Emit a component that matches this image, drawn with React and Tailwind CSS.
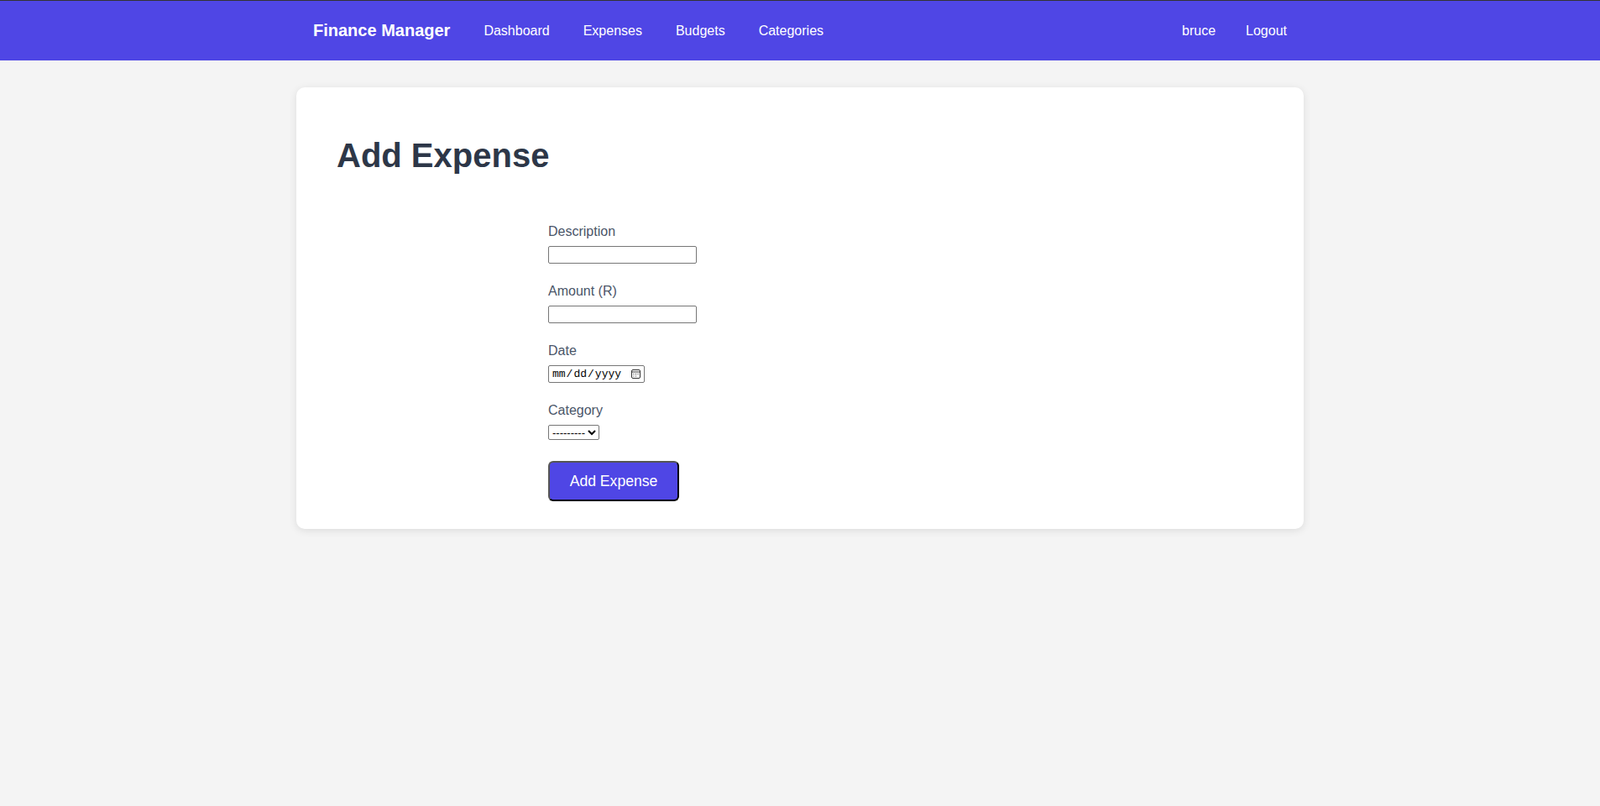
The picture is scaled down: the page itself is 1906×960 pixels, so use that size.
import React, { useState } from 'react';

const navLinks = ['Dashboard', 'Expenses', 'Budgets', 'Categories'];

const Field = ({ label, children }) => (
    <div className="mb-6">
        <label className="block mb-2 text-[16px] leading-[18px] text-[#4a5568]">{label}</label>
        {children}
    </div>
);

const CalendarIcon = () => (
    <svg width="11" height="11" viewBox="0 0 11 11" fill="none" stroke="#333" strokeWidth="1">
        <rect x="0.5" y="0.5" width="10" height="10" rx="1.5" />
        <line x1="0.5" y1="3" x2="10.5" y2="3" />
        <rect x="2.5" y="5" width="1" height="1" fill="#333" stroke="none" />
        <rect x="5" y="5" width="1" height="1" fill="#333" stroke="none" />
        <rect x="7.5" y="5" width="1" height="1" fill="#333" stroke="none" />
        <rect x="2.5" y="7.5" width="1" height="1" fill="#333" stroke="none" />
        <rect x="5" y="7.5" width="1" height="1" fill="#333" stroke="none" />
    </svg>
);

export default function App() {
    const [description, setDescription] = useState('');
    const [amount, setAmount] = useState('');
    const [date, setDate] = useState('');
    const [category, setCategory] = useState('');

    return (
        <div className="min-h-screen bg-[#f4f4f4] font-['Liberation_Sans',Arial,sans-serif]">
            {/* Navbar */}
            <nav className="h-[72px] bg-[#4f46e5] border-t border-[#333333] text-white">
                <div className="max-w-[1200px] mx-auto h-full px-5 flex items-center justify-between">
                    <div className="flex items-center">
                        <a href="#" className="text-[20px] font-bold leading-[23px]">Finance Manager</a>
                        {navLinks.map(link => (
                            <a key={link} href="#" className="ml-10 text-[16px] leading-[18px]">{link}</a>
                        ))}
                    </div>
                    <div className="flex items-center gap-9 text-[16px] leading-[18px]">
                        <span>bruce</span>
                        <a href="#">Logout</a>
                    </div>
                </div>
            </nav>

            {/* Card */}
            <div className="max-w-[1200px] mx-auto mt-8 bg-white rounded-[10px] shadow-[0_2px_10px_rgba(0,0,0,0.1)] px-12 pt-[57px] pb-[33px]">
                <h1 className="text-[40px] font-bold leading-[48px] text-[#2d3748]">Add Expense</h1>

                <form className="max-w-[600px] mx-auto mt-[58px]" onSubmit={(e) => e.preventDefault()}>
                    <Field label="Description">
                        <input
                            type="text"
                            value={description}
                            onChange={(e) => setDescription(e.target.value)}
                            className="block w-[177px] h-[21px] border border-[#767676] rounded-[2px] px-0.5 text-[13px] text-black bg-white"
                        />
                    </Field>
                    <Field label="Amount (R)">
                        <input
                            type="number"
                            value={amount}
                            onChange={(e) => setAmount(e.target.value)}
                            className="block w-[177px] h-[21px] border border-[#767676] rounded-[2px] px-0.5 text-[13px] text-black bg-white"
                        />
                    </Field>
                    <Field label="Date">
                        <div className="relative w-[115px]">
                            <input
                                type="date"
                                value={date}
                                onChange={(e) => setDate(e.target.value)}
                                className="block w-[115px] h-[21px] border border-[#767676] rounded-[2px] pl-[3px] pr-[2px] text-[13px] text-black bg-white font-['Liberation_Mono',monospace] [&::-webkit-calendar-picker-indicator]:opacity-0"
                            />
                            <span className="pointer-events-none absolute right-[5px] top-[5px]">
                                <CalendarIcon />
                            </span>
                        </div>
                    </Field>
                    <Field label="Category">
                        <select
                            value={category}
                            onChange={(e) => setCategory(e.target.value)}
                            className="block w-[61px] h-[18px] border border-[#767676] rounded-[2px] text-[13px] text-black bg-white"
                        >
                            <option value="">---------</option>
                            <option value="food">Food</option>
                            <option value="transport">Transport</option>
                        </select>
                    </Field>
                    <button
                        type="submit"
                        className="mt-px w-[156px] h-[48px] bg-[#4f46e5] text-white text-[17.6px] leading-[20px] rounded-md border-2 border-t-[#555555] border-l-[#555555] border-b-black border-r-black"
                    >
                        Add Expense
                    </button>
                </form>
            </div>
        </div>
    );
}
